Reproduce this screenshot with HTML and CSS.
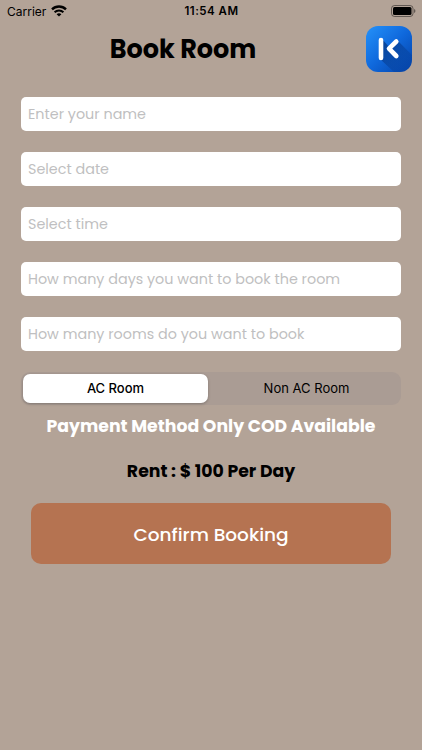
FILE: index.html
```html
<!DOCTYPE html>
<html lang="en">
<head>
  <meta charset="UTF-8">
  <meta name="viewport" content="width=device-width, initial-scale=1.0">
  <title>Book Room</title>
  <link rel="stylesheet" href="styles.css">
</head>
<body>

<div class="status-bar">
  <div class="carrier">
    <span>Carrier</span>
    <svg class="wifi" viewBox="0 0 16 12" width="16" height="12">
      <path d="M1 4.400C4.800 .5 11.200 .5 15 4.400" fill="none" stroke="#000" stroke-width="2.300"/>
      <path d="M3.600 7.300C6 4.900 10 4.900 12.400 7.300" fill="none" stroke="#000" stroke-width="2"/>
      <path d="M5.600 9.200C7 7.900 9 7.900 10.400 9.200L8 11.600Z"/>
    </svg>
  </div>
  <div class="time">11:54 AM</div>
  <svg class="battery" viewBox="0 0 25 12" width="25" height="12">
    <rect x=".5" y=".5" width="21.5" height="11" rx="3" fill="none" stroke="#000" stroke-opacity=".45"/>
    <rect x="2" y="2" width="18.5" height="8" rx="1.5"/>
    <path d="M23.200 4v4c1.600-.7 1.600-3.300 0-4z" fill-opacity=".55"/>
  </svg>
</div>

<header>
  <h1>Book Room</h1>
  <svg class="logo" viewBox="0 0 46 46" width="46" height="46">
    <defs>
      <linearGradient id="blue" x1="0" y1="0" x2="1" y2="1">
        <stop offset="0" stop-color="#2492fa"/>
        <stop offset=".5" stop-color="#0f68dc"/>
        <stop offset="1" stop-color="#0441a6"/>
      </linearGradient>
      <linearGradient id="shade" x1="0" y1="0" x2="1" y2="1">
        <stop offset=".1" stop-color="#053078" stop-opacity=".7"/>
        <stop offset=".9" stop-color="#053078" stop-opacity=".05"/>
      </linearGradient>
      <clipPath id="tile"><rect width="46" height="46" rx="12"/></clipPath>
    </defs>
    <g clip-path="url(#tile)">
      <rect width="46" height="46" fill="url(#blue)"/>
      <path d="M16 13L24 22L31 14L46 29V46H28L14 33Z" fill="url(#shade)"/>
    </g>
    <path d="M15 14V32M30.300 15.500L23 22.700L30.300 30" fill="none" stroke="#fff" stroke-width="4.600" stroke-linecap="round" stroke-linejoin="round"/>
  </svg>
</header>

<form>
  <input class="name" type="text" placeholder="Enter your name">
  <input class="date" type="text" placeholder="Select date">
  <input class="hour" type="text" placeholder="Select time">
  <input class="days" type="text" placeholder="How many days you want to book the room">
  <input class="rooms" type="text" placeholder="How many rooms do you want to book">

  <div class="segment">
    <div class="option selected">AC Room</div>
    <div class="option">Non AC Room</div>
  </div>

  <p class="payment">Payment Method Only COD Available</p>
  <p class="rent">Rent : $ 100 Per Day</p>
  <button type="button">Confirm Booking</button>
</form>

</body>
</html>
```

FILE: styles.css
```css
* {
  box-sizing: border-box;
}
body {
  margin: 0;
  min-height: 750px;
  background-color: #b3a397;
  font-family: Poppins, Inter, sans-serif;
  color: #000;
}
.status-bar {
  display: grid;
  grid-template-columns: 1fr auto 1fr;
  align-items: center;
  height: 22px;
  padding: 0 6px 0 7px;
  font-family: Inter, sans-serif;
  font-size: 12px;
}
.carrier {
  display: flex;
  align-items: center;
  gap: 5px;
}
.time {
  font-weight: 600;
  font-size: 11.5px;
  letter-spacing: 0.5px;
}
.battery {
  justify-self: end;
}
header {
  display: grid;
  grid-template-columns: 1fr 46px;
  align-items: center;
  height: 46px;
  margin: 4px 10px 0 0;
}
h1 {
  margin: 0;
  text-align: center;
  font-size: 25.5px;
  line-height: 46px;
  font-weight: 700;
}
form {
  padding: 25px 21px 0;
}
input {
  display: block;
  width: 100%;
  height: 34px;
  margin-bottom: 21px;
  padding: 0 7px;
  border: none;
  border-radius: 5px;
  background-color: #fff;
  font-family: inherit;
  font-size: 14.35px;
}
input::placeholder {
  color: #bfbfc1;
  opacity: 1;
}
.segment {
  display: flex;
  height: 33px;
  padding: 2px;
  border-radius: 9px;
  background-color: #aa9c94;
  font-family: Inter, sans-serif;
  font-size: 13px;
  line-height: 29px;
  text-align: center;
}
.option {
  flex: 1;
  padding-left: 6px;
}
.selected {
  flex: 0 0 185px;
  padding-left: 0;
  border-radius: 7px;
  background-color: #fff;
  font-weight: 500;
  box-shadow: 0 1px 3px rgba(0,0,0,0.25);
}
p {
  margin: 0;
  text-align: center;
  font-weight: 700;
  font-size: 17.3px;
  line-height: 26px;
}
.payment {
  margin-top: 8px;
  color: #fff;
}
.rent {
  margin-top: 19px;
}
button {
  display: block;
  width: 360px;
  height: 61px;
  margin: 19px auto 0;
  padding: 2px 0 0;
  border: none;
  border-radius: 10px;
  background-color: #b57351;
  color: #fff;
  font-family: inherit;
  font-size: 18.5px;
  font-weight: 500;
}
```
